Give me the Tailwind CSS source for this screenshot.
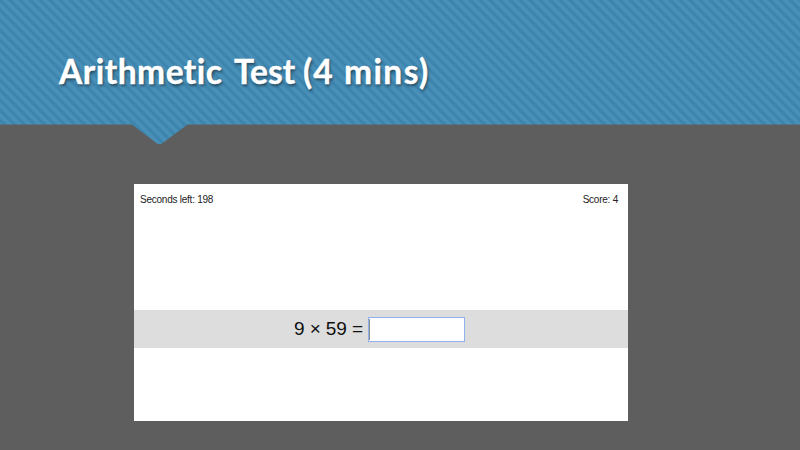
<!DOCTYPE html>
<html lang="en">
<head>
<meta charset="utf-8">
<title>Arithmetic Test</title>
<script src="https://cdn.jsdelivr.net/npm/@tailwindcss/browser@4"></script>
</head>
<body class="w-[800px] h-[450px] overflow-hidden bg-[#5e5e5e] font-['Liberation_Sans',Arial,sans-serif]">
<main class="relative w-[800px] h-[450px] flex flex-col">
  <svg class="absolute left-0 top-0" width="800" height="145" viewBox="0 0 800 145">
    <defs>
      <pattern id="stripes" width="10" height="10" patternUnits="userSpaceOnUse">
        <rect width="10" height="10" fill="#4990b8"/>
        <path d="M-2 -2L12 12M-2 8L2 12M8 -2L12 2" stroke="#3d85af" stroke-width="3.2"/>
      </pattern>
    </defs>
    <path d="M0 0H800V124.500H187.500L162 143.500Q159.500 145 157 143.500L132 124.500H0Z" fill="url(#stripes)"/>
  </svg>
  <header class="relative h-[125px] shrink-0 pl-[59px] pt-[49px]">
    <h1 class="flex h-[44px] items-center whitespace-nowrap text-[33.500px] leading-[44px] font-bold text-white font-['Lato',sans-serif] [-webkit-text-stroke:0.4px_white] [text-shadow:1px_2px_3px_rgb(0_0_0/0.5)]">
      <span class="w-[175px] tracking-[0.5px]">Arithmetic</span>
      <span class="w-[69px]">Test</span>
      <span class="w-[41px] tracking-[1px]">(4</span>
      <span class="tracking-[1.4px]">mins)</span>
    </h1>
  </header>
  <section class="mt-[59px] ml-[134px] flex h-[237px] w-[494px] shrink-0 flex-col bg-white text-[#222]">
    <div class="flex h-[126px] justify-between pt-[10px] pl-[6px] pr-[10px] text-[10px] leading-[12px]">
      <span class="tracking-[-0.24px]">Seconds left: 198</span>
      <span class="tracking-[-0.24px]">Score: 4</span>
    </div>
    <div class="flex h-[38px] items-center bg-[#dddddd] pl-[160px] text-[19px] text-[#111]">
      <label for="answer" class="w-[74px] whitespace-nowrap tracking-[-0.1px]">9 × 59 =</label>
      <div class="mt-px flex h-[25px] w-[97px] items-center border border-[#8fb2ee] bg-white">
        <span class="h-[21px] w-px bg-[#8a8a8a]"></span>
        <input id="answer" class="h-full min-w-0 flex-1 outline-none">
      </div>
    </div>
  </section>
</main>
</body>
</html>
